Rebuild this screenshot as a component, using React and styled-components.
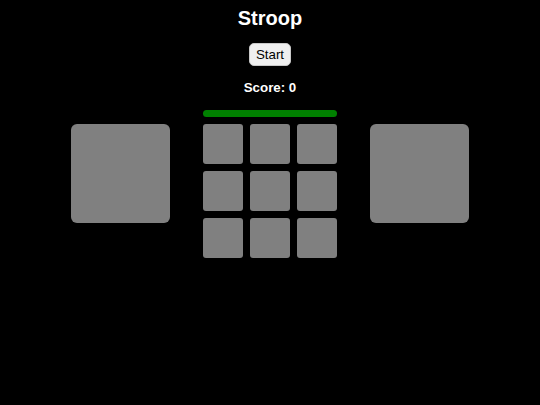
import React from "react";
import styled, { createGlobalStyle } from "styled-components";

const GlobalStyle = createGlobalStyle`
  html, body {
    margin: 0;
    padding: 0;
    background: #000;
  }
  body {
    font-family: "Liberation Sans", Arial, sans-serif;
    color: #fff;
  }
`;

const Page = styled.div`
  min-height: 405px;
  padding-top: 7px;
  display: flex;
  flex-direction: column;
  align-items: center;
  box-sizing: border-box;
`;

const Title = styled.h1`
  margin: 0 0 13px;
  font-size: 20px;
  line-height: 23px;
  font-weight: bold;
`;

const StartButton = styled.button`
  font-family: "Liberation Sans", Arial, sans-serif;
  font-size: 13.33px;
  line-height: 15px;
  height: 23px;
  padding: 3px 6px;
  color: #000;
  background: #efefef;
  border: 1px solid #c8c8c8;
  border-radius: 5px;
  box-sizing: border-box;
  cursor: pointer;
`;

const Score = styled.div`
  margin-top: 14px;
  font-size: 13.33px;
  line-height: 16px;
  font-weight: bold;
`;

const Board = styled.div`
  margin-top: 14px;
  display: flex;
  flex-direction: column;
  align-items: center;
  gap: 7px;
`;

const TimerBar = styled.div`
  width: 134px;
  height: 7px;
  border-radius: 4px;
  background: #008000;
`;

const Row = styled.div`
  display: flex;
  align-items: flex-start;
  gap: 33px;
`;

const SideTile = styled.div`
  width: 99px;
  height: 99px;
  border-radius: 6px;
  background: #808080;
`;

const Grid = styled.div`
  display: grid;
  grid-template-columns: repeat(3, 40px);
  grid-auto-rows: 40px;
  gap: 7px;
`;

const Cell = styled.div`
  border-radius: 3px;
  background: #808080;
`;

export default function App() {
  return (
    <>
      <GlobalStyle />
      <Page>
        <Title>Stroop</Title>
        <StartButton>Start</StartButton>
        <Score>Score: 0</Score>
        <Board>
          <TimerBar />
          <Row>
            <SideTile />
            <Grid>
              {Array.from({ length: 9 }, (_, i) => (
                <Cell key={i} />
              ))}
            </Grid>
            <SideTile />
          </Row>
        </Board>
      </Page>
    </>
  );
}
